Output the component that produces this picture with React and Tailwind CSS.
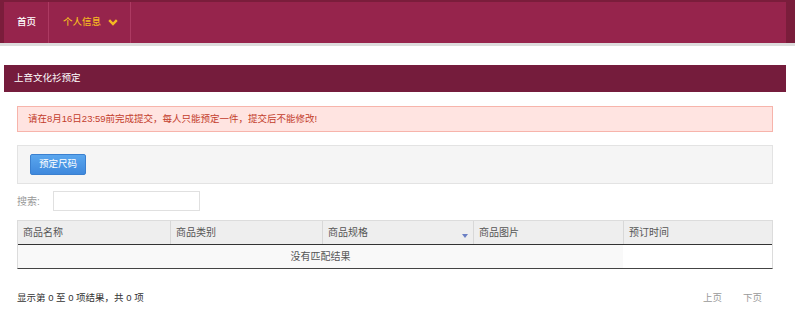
import React from 'react';

const COLUMNS = ['商品名称', '商品类别', '商品规格', '商品图片', '预订时间'];

export default function App() {
  return (
    <div
      className="w-[795px] h-[321px] bg-white text-[10px] text-[#333] overflow-hidden"
      style={{ fontFamily: '"Liberation Sans", "Noto Sans CJK SC", sans-serif' }}
    >
      {/* top nav */}
      <div className="h-[41px] bg-[#7a1d3b] pt-[2px] pl-[4px] pr-[9px] border-b-[3px] border-[#dcdcdc] box-content">
        <div className="h-[41px] bg-[#96244c] flex items-stretch text-[9.5px] font-medium">
          <div className="flex items-center pl-[13px] pr-[12px] text-white border-r border-[#ad3a62]">首页</div>
          <div className="flex items-center pl-[14px] pr-[12px] text-[#f5b921] border-r border-[#ad3a62] gap-[7px]">
            <span>个人信息</span>
            <svg width="10" height="7" viewBox="0 0 10 7">
              <path d="M1.2 1.2 L5 5 L8.8 1.2" fill="none" stroke="#f5b921" strokeWidth="2.4" />
            </svg>
          </div>
        </div>
      </div>

      {/* panel */}
      <div className="pt-[19px] pl-[4px] pr-[9px]">
        <div className="h-[27px] bg-[#751c3c] flex items-center px-[10px] text-white text-[9.5px]">上音文化衫预定</div>
      </div>

      <div className="pl-[17px] pr-[22px]">
        <div className="mt-[14px] h-[26px] bg-[#ffe4e1] border border-[#f7b4ab] flex items-center pl-[10px] text-[#c33d2c] text-[9.5px]">
          请在8月16日23:59前完成提交，每人只能预定一件，提交后不能修改!
        </div>

        <div className="mt-[13px] h-[39px] bg-[#f5f5f5] border border-[#e3e3e3] flex items-center pl-[12px]">
          <button className="h-[21px] px-[8px] text-white text-[9.5px] rounded-[2px] bg-gradient-to-b from-[#5aa6ee] to-[#3f89dd] border border-[#3b80cf]">
            预定尺码
          </button>
        </div>

        <div className="mt-[7px] h-[20px] flex items-center">
          <span className="text-[#999] w-[36px]">搜索:</span>
          <div className="w-[147px] h-[20px] border border-[#e0e0e0] bg-white"></div>
        </div>

        <div className="mt-[9px] border border-[#dcdcdc] border-b-[#444] border-b-[1.5px]">
          <div className="grid grid-cols-[152px_152px_151px_150px_1fr] h-[24px] bg-[#eeeeee] border-b-[1.5px] border-[#333]">
            {COLUMNS.map((c, i) => (
              <div
                key={c}
                className={`flex items-center px-[5px] text-[#555] relative ${i > 0 ? 'border-l border-[#d8d8d8]' : ''}`}
              >
                {c}
                {i === 2 && (
                  <svg className="absolute right-[5px] top-[13px]" width="6" height="4" viewBox="0 0 6 4">
                    <path d="M0 0 L6 0 L3 4 Z" fill="#6b7fc4" />
                  </svg>
                )}
              </div>
            ))}
          </div>
          <div className="grid grid-cols-[605px_1fr] h-[23px]">
            <div className="bg-[#f9f9f9] flex items-center justify-center text-[#555]">没有匹配结果</div>
            <div className="bg-white"></div>
          </div>
        </div>

        <div className="mt-[22px] flex items-center justify-between text-[9.5px]">
          <span className="text-[#333]">显示第 0 至 0 项结果，共 0 项</span>
          <div className="flex gap-[21px] text-[#999] pr-[11px]">
            <span>上页</span>
            <span>下页</span>
          </div>
        </div>
      </div>
    </div>
  );
}
